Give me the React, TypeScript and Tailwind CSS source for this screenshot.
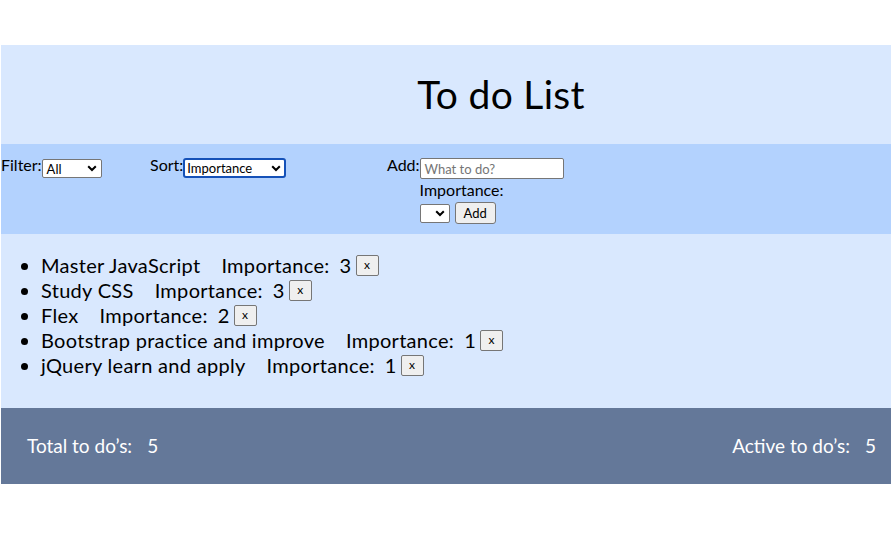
import React from "react";

const todos = [
  { text: "Master JavaScript", imp: 3 },
  { text: "Study CSS", imp: 3 },
  { text: "Flex", imp: 2 },
  { text: "Bootstrap practice and improve", imp: 1 },
  { text: "jQuery learn and apply", imp: 1 },
];

function Chevron() {
  return (
    <svg width="10" height="7" viewBox="0 0 10 7" className="shrink-0">
      <path d="M1.2 1.2 L5 5 L8.8 1.2" fill="none" stroke="#000" strokeWidth="2" />
    </svg>
  );
}

export default function App() {
  return (
    <div className="pt-[45px] pl-px font-['Lato','Noto_Sans',sans-serif] text-black">
      <header className="h-[99px] bg-[#d9e8fe] flex items-center justify-center pl-[110px]">
        <h1 className="text-[39px] leading-none font-normal tracking-[0.3px] -mt-[1px]">To do List</h1>
      </header>

      <section className="h-[90px] bg-[#b3d2fe] flex items-start pt-[11px] text-[16px] leading-[20px]">
        <div className="w-[149px] flex items-start">
          <span>Filter:</span>
          <div className="mt-[4px] w-[60px] h-[19px] bg-white border border-[#767676] rounded-[2px] flex items-center justify-between pl-[4px] pr-[4px] text-[13px]">
            <span>All</span>
            <Chevron />
          </div>
        </div>
        <div className="w-[237px] flex items-start">
          <span>Sort:</span>
          <div className="mt-[3px] w-[103px] h-[20px] bg-white border-2 border-[#1551b8] rounded-[3px] flex items-center justify-between pl-[2px] pr-[3px] text-[13px]">
            <span>Importance</span>
            <Chevron />
          </div>
        </div>
        <div className="flex items-start">
          <span>Add:</span>
          <div className="flex flex-col">
            <div className="mt-[3px] w-[144px] h-[21px] bg-white border border-[#767676] rounded-[2px] flex items-center px-[4px] text-[13px] text-[#757575]">
              What to do?
            </div>
            <span className="mt-[1px] leading-[20px]">Importance:</span>
            <div className="flex items-center gap-[5px] mt-[2px]">
              <div className="w-[30px] h-[19px] bg-white border border-[#767676] rounded-[2px] flex items-center justify-end pr-[4px]">
                <Chevron />
              </div>
              <button className="w-[41px] h-[22px] bg-[#efefef] border border-[#767676] rounded-[3px] text-[13px] leading-none flex items-center justify-center">
                Add
              </button>
            </div>
          </div>
        </div>
      </section>

      <section className="h-[174px] bg-[#d9e8fe] pt-[19px]">
        <ul className="list-disc pl-10 text-[20px] leading-[25px] tracking-[0.3px]">
          {todos.map((t) => (
            <li key={t.text}>
              <span className="inline-flex items-center">
                <span>{t.text}</span>
                <span className="ml-[21px]">Importance:</span>
                <span className="ml-[10px]">{t.imp}</span>
                <button className="ml-[4px] w-[23px] h-[21px] bg-[#efefef] border border-[#767676] rounded-[2px] text-[12px] leading-none flex items-center justify-center pb-[2px]">
                  x
                </button>
              </span>
            </li>
          ))}
        </ul>
      </section>

      <footer className="h-[76px] bg-[#647899] flex items-center justify-between pl-[26px] pr-[15px] text-white text-[19px]">
        <span>
          Total to do’s:<span className="ml-[15px]">5</span>
        </span>
        <span>
          Active to do’s:<span className="ml-[15px]">5</span>
        </span>
      </footer>
    </div>
  );
}
